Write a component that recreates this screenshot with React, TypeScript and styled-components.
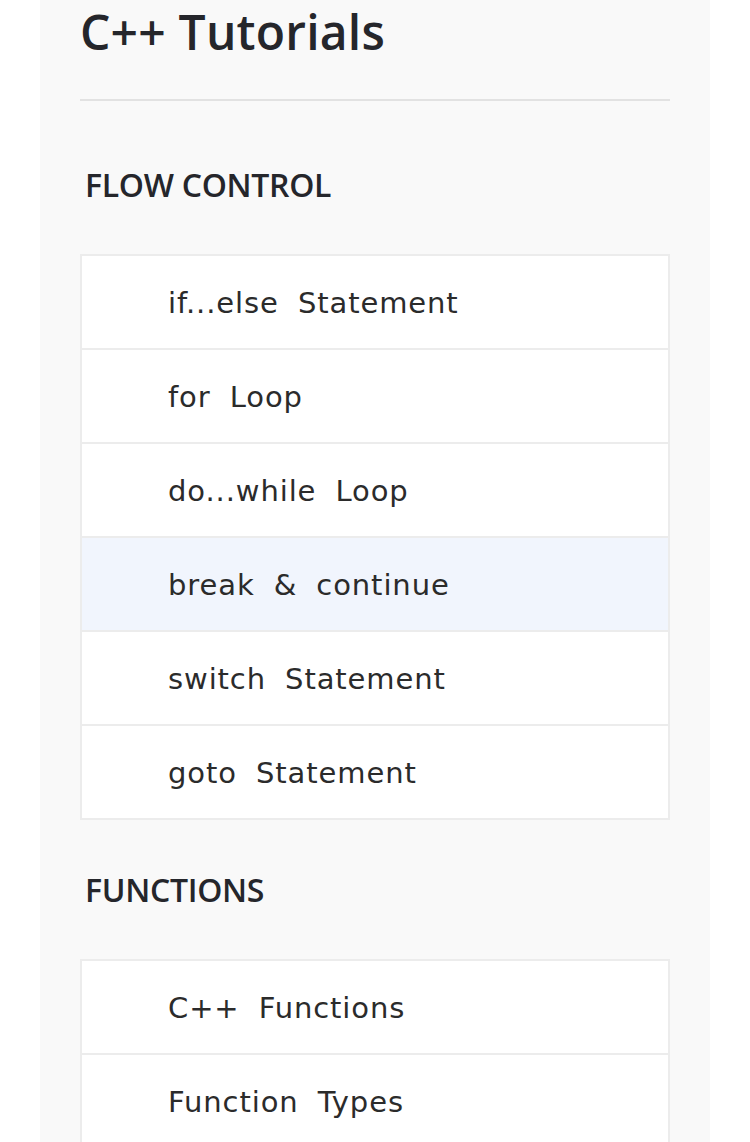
import styled, { createGlobalStyle } from "styled-components";

const GlobalStyle = createGlobalStyle`
  html, body {
    margin: 0;
    padding: 0;
    background: #ffffff;
  }
`;

interface Section {
  title: string;
  items: string[];
  active?: string;
}

const sections: Section[] = [
  {
    title: "FLOW CONTROL",
    items: [
      "if...else Statement",
      "for Loop",
      "do...while Loop",
      "break & continue",
      "switch Statement",
      "goto Statement",
    ],
    active: "break & continue",
  },
  {
    title: "FUNCTIONS",
    items: ["C++ Functions", "Function Types"],
  },
];

function App() {
  return (
    <Page>
      <GlobalStyle />
      <Sidebar>
        <Title>C++ Tutorials</Title>
        <Divider />
        {sections.map((section) => (
          <div key={section.title}>
            <SectionTitle>{section.title}</SectionTitle>
            <List>
              {section.items.map((item) => (
                <Item key={item} $active={item === section.active}>
                  {item}
                </Item>
              ))}
            </List>
          </div>
        ))}
      </Sidebar>
    </Page>
  );
}

const Page = styled.div`
  width: 750px;
  height: 1142px;
  overflow: hidden;
  background: #ffffff;
`;

const Sidebar = styled.div`
  margin-left: 40px;
  width: 670px;
  min-height: 1142px;
  box-sizing: border-box;
  padding: 0 40px;
  background: #f9f9f9;
`;

const Title = styled.h1`
  margin: 0;
  padding-top: 2px;
  height: 84px;
  box-sizing: border-box;
  font-family: "Open Sans", "Noto Sans", sans-serif;
  font-weight: 600;
  font-size: 48px;
  line-height: 60px;
  color: #25262b;
  letter-spacing: 0.2px;
`;

const Divider = styled.div`
  height: 2px;
  width: 590px;
  background: #e2e2e2;
  margin-top: 15px;
  margin-bottom: 14px;
`;

const SectionTitle = styled.h2`
  margin: 0;
  height: 139px;
  box-sizing: border-box;
  padding: 50px 0 0 5px;
  font-family: "Open Sans", "Noto Sans", sans-serif;
  font-weight: 600;
  font-size: 32px;
  line-height: 40px;
  color: #25262b;
  letter-spacing: -0.3px;
`;

const List = styled.ul`
  list-style: none;
  margin: 0;
  padding: 0;
  width: 590px;
  box-sizing: border-box;
  border: 2px solid #ececec;
  border-bottom-width: 0;
  background: #ffffff;
`;

const Item = styled.li<{ $active?: boolean }>`
  height: 94px;
  box-sizing: border-box;
  display: flex;
  align-items: center;
  padding: 2px 0 0 86px;
  border-bottom: 2px solid #ececec;
  background: ${(p) => (p.$active ? "#f1f5fd" : "#ffffff")};
  font-family: "DejaVu Sans", "Liberation Sans", sans-serif;
  font-size: 29px;
  color: #2b2b2b;
  word-spacing: 9px;
  letter-spacing: 0.9px;
`;

export default App;
